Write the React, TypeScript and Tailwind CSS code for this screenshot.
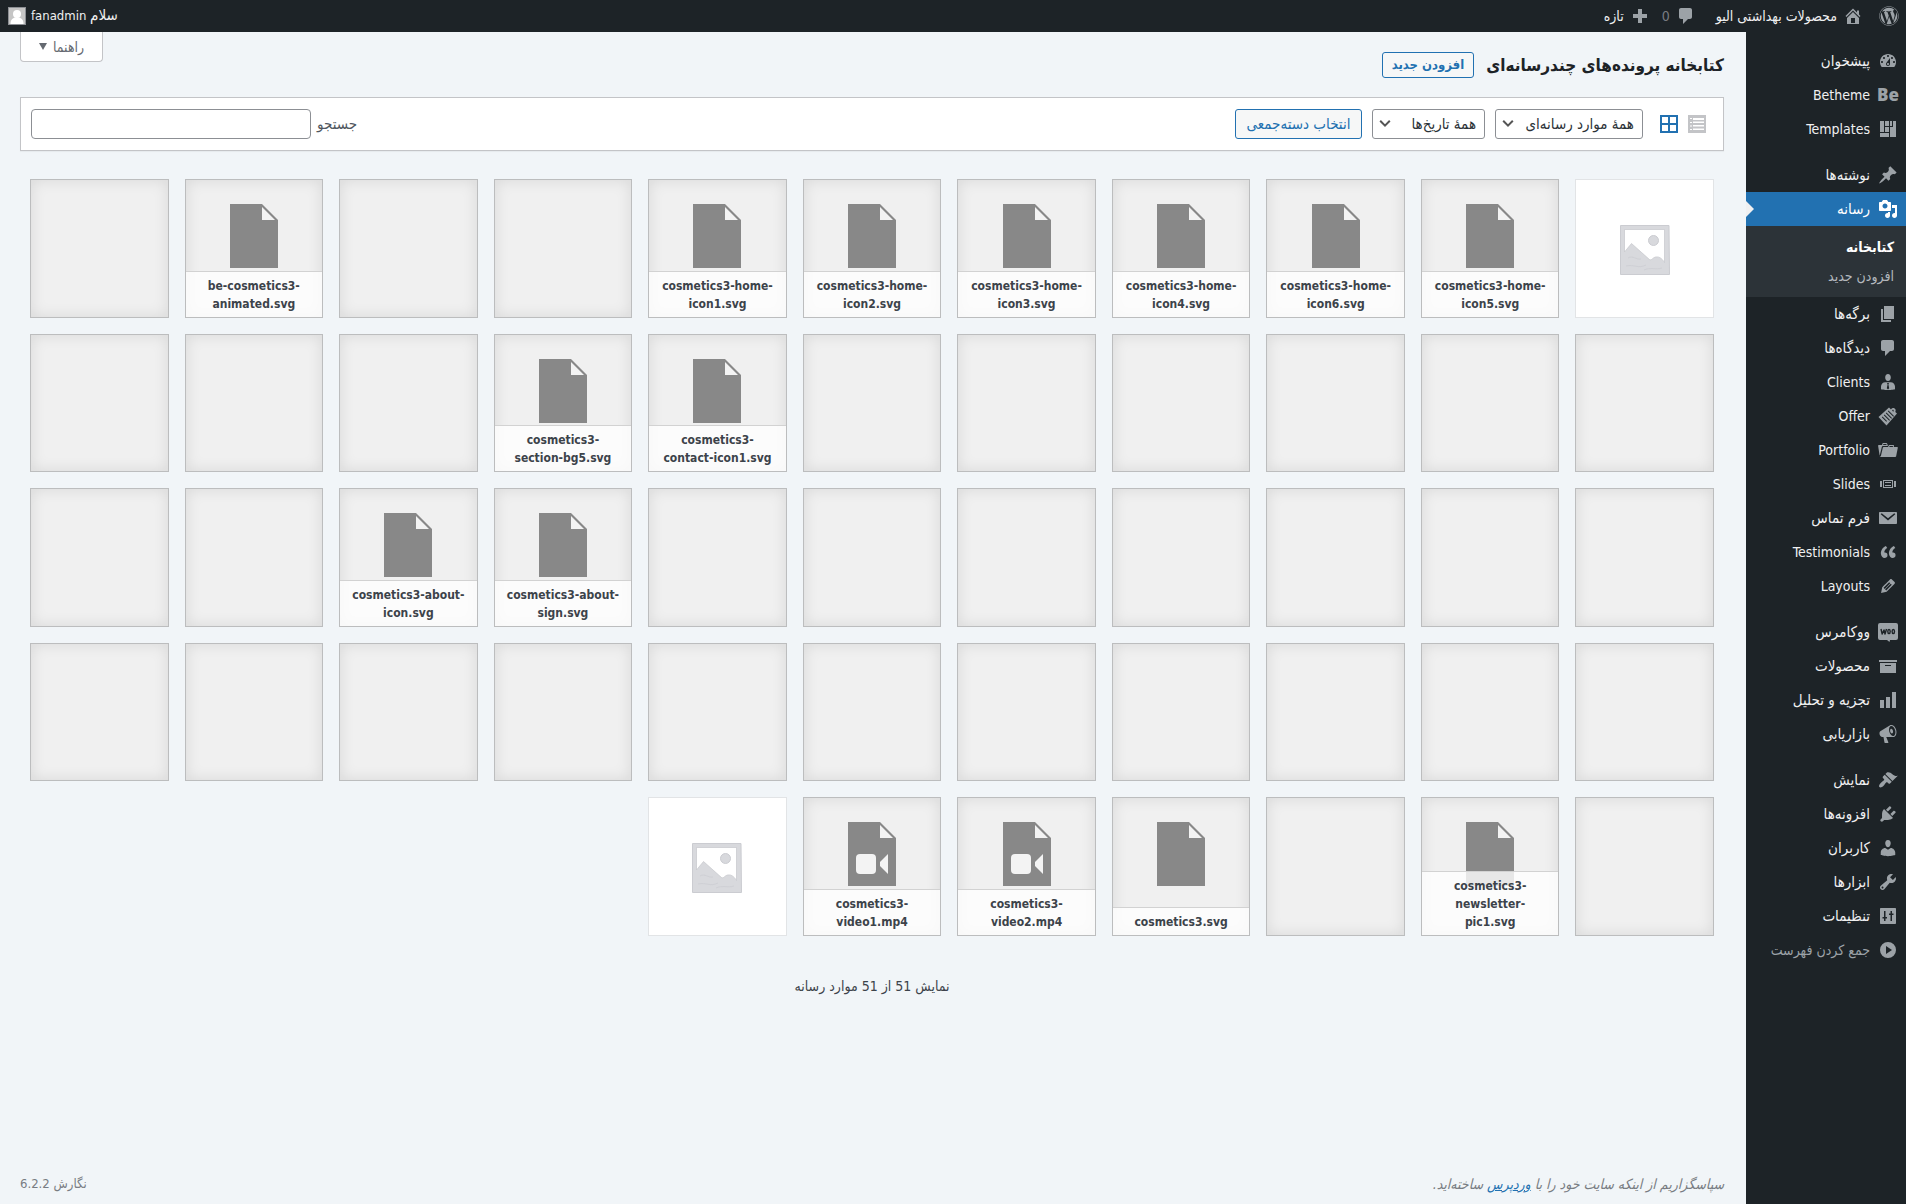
import { useState, type ReactNode } from 'react';
import { FaWordpress } from 'react-icons/fa';
import { clsx } from 'clsx';

interface MenuEntry {
  id: string;
  label: string;
  icon: ReactNode;
  latin?: boolean;
  muted?: boolean;
}

interface MediaItem {
  type: 'empty' | 'file' | 'video' | 'image';
  name?: string;
}

const Glyph = ({ d, className = 'size-5' }: { d: string; className?: string }) => (
  <svg viewBox="0 0 20 20" fill="currentColor" fillRule="evenodd" className={className} aria-hidden="true">
    <path d={d} />
  </svg>
);

const PATHS = {
  dashboard:
    'M3.76 16h12.48c1.1-1.37 1.76-3.11 1.76-5 0-4.42-3.58-8-8-8s-8 3.58-8 8c0 1.89.66 3.63 1.76 5zM10 4c.55 0 1 .45 1 1s-.45 1-1 1-1-.45-1-1 .45-1 1-1zM6 6c.55 0 1 .45 1 1s-.45 1-1 1-1-.45-1-1 .45-1 1-1zm8 0c.55 0 1 .45 1 1s-.45 1-1 1-1-.45-1-1 .45-1 1-1zm-5.37 5.55L12 7v6c0 1.1-.9 2-2 2s-2-.9-2-2c0-.57.24-1.08.63-1.45zM4 10c.55 0 1 .45 1 1s-.45 1-1 1-1-.45-1-1 .45-1 1-1zm12 0c.55 0 1 .45 1 1s-.45 1-1 1-1-.45-1-1 .45-1 1-1zm-5 3c0-.55-.45-1-1-1s-1 .45-1 1 .45 1 1 1 1-.45 1-1z',
  templates: 'M2 2h4v11H2zM7 2h4v5H7zM7 8h4v5H7zM2 14h9v4H2zM12 2h2v5h-2zM15 2h3v16h-6V8h3z',
  post: 'M10.44 3.02l1.82-1.82 6.36 6.35-1.83 1.82c-1.05-.68-2.48-.57-3.41.36l-.75.75c-.92.93-1.04 2.35-.35 3.41l-1.83 1.82-2.41-2.41-2.8 2.79c-.42.42-3.38 2.71-3.8 2.29s1.86-3.39 2.28-3.81l2.79-2.79L4.1 9.36l1.83-1.82c1.05.69 2.48.57 3.4-.36l.75-.75c.93-.92 1.05-2.35.36-3.41z',
  media:
    'M13 11V4c0-.55-.45-1-1-1h-1.67L9 1H5L3.67 3H2c-.55 0-1 .45-1 1v7c0 .55.45 1 1 1h10c.55 0 1-.45 1-1zM7 4.5c1.38 0 2.5 1.12 2.5 2.5S8.38 9.5 7 9.5 4.5 8.38 4.5 7 5.62 4.5 7 4.5zM14 6h5v10.5c0 1.38-1.12 2.5-2.5 2.5S14 17.88 14 16.5s1.12-2.5 2.5-2.5c.17 0 .34.02.5.05V9h-3V6zm-4 8.05V13h2v3.5c0 1.38-1.12 2.5-2.5 2.5S7 17.88 7 16.5 8.12 14 9.5 14c.17 0 .34.02.5.05z',
  page: 'M6 15V2h10v13H6zm-1 1h8v2H3V5h2v11z',
  comments: 'M5 2h9c1.1 0 2 .9 2 2v7c0 1.1-.9 2-2 2h-2l-5 5v-5H5c-1.1 0-2-.9-2-2V4c0-1.1.9-2 2-2z',
  clients:
    'M10 9c-2.1 0-2.8-2.1-2.8-3.6C7.2 3.5 8.3 2 10 2s2.8 1.5 2.8 3.4C12.8 6.9 12.1 9 10 9zM7.3 10.2h5.4c2.4 0 4.3 2 4.3 4.3v2.7s-3.5.8-7 .8-7-.8-7-.8v-2.7c0-2.3 1.9-4.3 4.3-4.3zM9 11l.6 1.5-.8 3.8L10 17.5l1.2-1.2-.8-3.8L11 11z',
  offer:
    'M11 1.5l2 2c.7-1.2 2-1.8 3.3-1.2 1.5.7 1.7 2.3 1 3.6l1.7 1.6L8.5 19.5.5 11zM14.3 4.7l1 1c.5-.6.6-1.5 0-1.9-.5-.4-1.2.1-1 .9zM10.5 4.5l-.7.7 5.5 5.5.7-.7zM8.5 6.5l-.7.7 5.5 5.5.7-.7zM6.5 8.5l-.7.7 5.5 5.5.7-.7zM4.5 10.5l-.7.7 4.5 4.5.7-.7z',
  portfolio:
    'M4 5H.78c-.37 0-.74.32-.69.84l1.56 9.99S3.5 8.47 3.86 6.7c.11-.53.61-.7.98-.7H10s-.7-2.08-.77-2.31C9.11 3.25 8.89 3 8.45 3H5.14c-.36 0-.7.23-.8.64C4.25 4.04 4 5 4 5zm4.88 0h-4s.42-1 .87-1h2.13c.48 0 1 1 1 1zM2.67 16.25c-.31.47-.76.75-1.26.75h15.73c.54 0 .92-.31 1.03-.83.44-2.19 1.68-8.44 1.68-8.44.07-.5-.3-.73-.62-.73H16V5.53c0-.16-.26-.53-.66-.53h-3.76c-.52 0-.87.58-.87.58L10 7H5.59c-.32 0-.63.19-.69.5 0 0-1.59 6.7-1.72 7.33-.07.37-.22.99-.51 1.42zM15.38 7H11s.58-1 1.13-1h2.29c.71 0 .96 1 .96 1z',
  slides: 'M2 7h2v6H2zM16 7h2v6h-2zM5 6h10v8H5zM6 7v6h8V7zM7 8h6v1H7zM7 11h6v1H7z',
  mail: 'M2 4h16c.5 0 1 .4 1 1v10c0 .6-.5 1-1 1H2c-.6 0-1-.4-1-1V5c0-.6.4-1 1-1zM3.7 5.2l-1 1L10 12.5l7.3-6.3-1-1L10 10.3z',
  quote:
    'M9.49 13.22c0-.74-.2-1.38-.61-1.9-.62-.78-1.83-.88-2.53-.72-.29-1.65 1.11-3.75 2.92-4.65L7.88 4c-2.73 1.3-5.42 4.28-4.96 8.05C3.21 14.43 4.59 16 6.54 16c.85 0 1.56-.25 2.12-.75s.83-1.18.83-2.03zm8.05 0c0-.74-.2-1.38-.61-1.9-.63-.78-1.83-.88-2.53-.72-.29-1.65 1.11-3.75 2.92-4.65L15.93 4c-2.73 1.3-5.41 4.28-4.95 8.05.29 2.38 1.66 3.95 3.61 3.95.85 0 1.56-.25 2.12-.75s.83-1.18.83-2.03z',
  edit: 'M13.89 3.39l2.71 2.72c.46.46.42 1.24.03 1.64l-8.01 8.02-5.56 1.16 1.16-5.58s7.6-7.63 7.99-8.03c.39-.39 1.22-.39 1.68.07zm-2.73 2.79l-5.59 5.61 1.11 1.11 5.54-5.65zm-2.97 8.23l5.58-5.6-1.07-1.08-5.59 5.6z',
  archive: 'M19 4v2H1V4h18zM2 7h16v10H2V7zm11 3V9H7v1h6z',
  chart: 'M18 18V2h-4v16h4zm-6 0V7H8v11h4zm-6 0v-8H2v8h4z',
  megaphone:
    'M18.15 5.94c.46 1.62.38 3.22-.02 4.48-.42 1.28-1.26 2.18-2.3 2.48-.16.06-.26.06-.4.06-.06.02-.12.02-.18.02-.06.02-.14.02-.22.02h-6.8l2.22 5.5c.02.14-.06.26-.14.34-.08.1-.24.16-.34.16H6.95c-.1 0-.26-.06-.34-.16-.08-.08-.16-.2-.14-.34l-1-5.5H4.25l-.02-.02c-.5.06-1.08-.18-1.54-.62s-.88-1.08-1.06-1.88c-.24-.8-.2-1.56-.02-2.2.18-.62.58-1.08 1.06-1.3l.02-.02 9-5.4c.1-.06.18-.1.24-.16.06-.04.14-.08.24-.12.16-.08.28-.12.5-.18 1.04-.3 2.24.1 3.22.98s1.84 2.24 2.26 3.86zm-2.58 5.98h-.02c.4-.1.74-.34 1.04-.7.58-.7.86-1.76.86-3.04 0-.64-.1-1.3-.28-1.98-.34-1.36-1.02-2.5-1.78-3.24s-1.68-1.1-2.46-.88c-.82.22-1.4.96-1.7 2-.32 1.04-.28 2.36.06 3.72.38 1.36 1 2.5 1.8 3.24.78.74 1.62 1.1 2.48.88zm-2.54-7.08c.22-.04.42-.02.62.04.38.16.76.48 1.02 1s.42 1.2.42 1.78c0 .3-.04.56-.12.8-.18.48-.44.84-.86.94-.34.1-.8-.06-1.14-.4s-.64-.86-.78-1.5c-.18-.62-.12-1.24.02-1.72s.48-.84.82-.94z',
  appearance:
    'M14.48 11.06L7.41 3.99l1.5-1.5c.5-.56 2.3-.47 3.51.32 1.21.8 1.43 1.28 2.91 2.1 1.18.64 2.45 1.26 4.45.85zm-.71.71L6.7 4.7 4.93 6.47c-.39.39-.39 1.02 0 1.41l1.06 1.06c.39.39.39 1.03 0 1.42-.6.6-1.43 1.11-2.21 1.69-.35.26-.7.53-1.01.84C1.43 14.23.4 16.08 1.4 17.07c.99 1 2.84-.03 4.18-1.36.31-.31.58-.66.85-1.02.57-.78 1.08-1.61 1.69-2.21.39-.39 1.02-.39 1.41 0l1.06 1.06c.39.39 1.02.39 1.41 0z',
  plugins:
    'M13.11 4.36L9.87 7.6 8 5.73l3.24-3.24c.35-.34 1.05-.2 1.56.32.52.51.66 1.21.31 1.55zm-8 1.77l.91-1.12 9.01 9.01-1.19.84c-.71.71-2.63 1.16-3.82 1.16H6.14L4.9 17.26c-.59.59-1.54.59-2.12 0-.59-.58-.59-1.53 0-2.12l1.24-1.24v-3.88c0-1.13.4-3.19 1.09-3.89zm7.26 3.97l3.24-3.24c.34-.35 1.04-.21 1.55.31.52.51.66 1.21.31 1.55l-3.24 3.25z',
  users:
    'M10 9.25c-2.27 0-2.73-3.44-2.73-3.44C7 4.02 7.82 2 9.97 2c2.16 0 2.98 2.02 2.71 3.81 0 0-.41 3.44-2.68 3.44zm0 2.57L12.72 10c2.39 0 4.52 2.33 4.52 4.53v2.49s-3.65 1.13-7.24 1.13c-3.65 0-7.24-1.13-7.24-1.13v-2.49c0-2.25 1.94-4.48 4.47-4.48z',
  tools:
    'M16.68 9.77c-1.34 1.34-3.3 1.67-4.95.99l-5.41 6.52c-.99.99-2.59.99-3.58 0s-.99-2.59 0-3.57l6.52-5.42c-.68-1.65-.35-3.61.99-4.95 1.28-1.28 3.12-1.62 4.72-1.06l-2.89 2.89 2.82 2.82 2.86-2.87c.53 1.58.18 3.39-1.08 4.65zM3.81 16.21c.4.39 1.04.39 1.43 0 .4-.4.4-1.04 0-1.43-.39-.4-1.03-.4-1.43 0-.39.39-.39 1.03 0 1.43z',
  settings:
    'M3 2h14c.6 0 1 .4 1 1v14c0 .6-.4 1-1 1H3c-.6 0-1-.4-1-1V3c0-.6.4-1 1-1zM6 5v6H4.5v1.5H6V15h1.5v-2.5H9V11H7.5V5zM12.5 5v2.5H11V9h1.5v6H14V9h1.5V7.5H14V5z',
  collapse: 'M10 2a8 8 0 1 1 0 16 8 8 0 0 1 0-16zM8 6v8l6-4z',
  home: 'M16 8.5l1.53 1.53-1.06 1.06L10 4.6l-6.47 6.49-1.06-1.06L10 2.5l4 4v-2h2v4zm-6-2.46l6 5.99V18H4v-5.97zM12 17v-5H8v5h4z',
  plus: 'M8 3h4v5h5v4h-5v5H8v-5H3V8h5z',
  list: 'M1 1h18v18H1zM3 4v1h2V4zM6 4v2h11V4zM3 8v1h2V8zM6 7.5V9h11V7.5zM3 11.5v1h2v-1zM6 11v1.5h11V11zM3 15v1h2v-1zM6 14.5V16h11v-1.5z',
  grid: 'M1 1h18v18H1zM3 3v6h6V3zM11 3v6h6V3zM3 11v6h6v-6zM11 11v6h6v-6z',
};

const WooIcon = () => (
  <svg viewBox="0 0 20 20" className="size-5" aria-hidden="true">
    <path fill="currentColor" d="M2 1h16a2 2 0 0 1 2 2v13a2 2 0 0 1-2 2h-6l-.5 2L9 18H2a2 2 0 0 1-2-2V3a2 2 0 0 1 2-2z" />
    <g fill="none" stroke="#1d2327" strokeWidth="1.4" strokeLinejoin="round">
      <path d="M3 7l1.2 5L6 8l1 4 1.5-5" />
      <ellipse cx="11" cy="9.5" rx="1.2" ry="2" />
      <ellipse cx="15.3" cy="9.5" rx="1.2" ry="2" />
    </g>
  </svg>
);

const MENU_GROUPS: MenuEntry[][] = [
  [
    { id: 'dashboard', label: 'پیشخوان', icon: <Glyph d={PATHS.dashboard} /> },
    {
      id: 'betheme',
      label: 'Betheme',
      latin: true,
      icon: <span className="font-['Open_Sans',sans-serif] text-[17px] font-extrabold">Be</span>,
    },
    { id: 'templates', label: 'Templates', latin: true, icon: <Glyph d={PATHS.templates} /> },
  ],
  [
    { id: 'posts', label: 'نوشته‌ها', icon: <Glyph d={PATHS.post} /> },
    { id: 'media', label: 'رسانه', icon: <Glyph d={PATHS.media} /> },
    { id: 'pages', label: 'برگه‌ها', icon: <Glyph d={PATHS.page} /> },
    { id: 'comments', label: 'دیدگاه‌ها', icon: <Glyph d={PATHS.comments} /> },
    { id: 'clients', label: 'Clients', latin: true, icon: <Glyph d={PATHS.clients} /> },
    { id: 'offer', label: 'Offer', latin: true, icon: <Glyph d={PATHS.offer} /> },
    { id: 'portfolio', label: 'Portfolio', latin: true, icon: <Glyph d={PATHS.portfolio} /> },
    { id: 'slides', label: 'Slides', latin: true, icon: <Glyph d={PATHS.slides} /> },
    { id: 'forms', label: 'فرم تماس', icon: <Glyph d={PATHS.mail} /> },
    { id: 'testimonials', label: 'Testimonials', latin: true, icon: <Glyph d={PATHS.quote} /> },
    { id: 'layouts', label: 'Layouts', latin: true, icon: <Glyph d={PATHS.edit} /> },
  ],
  [
    { id: 'woo', label: 'ووکامرس', icon: <WooIcon /> },
    { id: 'products', label: 'محصولات', icon: <Glyph d={PATHS.archive} /> },
    { id: 'analytics', label: 'تجزیه و تحلیل', icon: <Glyph d={PATHS.chart} /> },
    { id: 'marketing', label: 'بازاریابی', icon: <Glyph d={PATHS.megaphone} /> },
  ],
  [
    { id: 'appearance', label: 'نمایش', icon: <Glyph d={PATHS.appearance} /> },
    { id: 'plugins', label: 'افزونه‌ها', icon: <Glyph d={PATHS.plugins} /> },
    { id: 'users', label: 'کاربران', icon: <Glyph d={PATHS.users} /> },
    { id: 'tools', label: 'ابزارها', icon: <Glyph d={PATHS.tools} /> },
    { id: 'settings', label: 'تنظیمات', icon: <Glyph d={PATHS.settings} /> },
    { id: 'collapse', label: 'جمع کردن فهرست', icon: <Glyph d={PATHS.collapse} />, muted: true },
  ],
];

const empty = (count: number): MediaItem[] => Array.from({ length: count }, () => ({ type: 'empty' }));
const file = (name: string): MediaItem => ({ type: 'file', name });
const video = (name: string): MediaItem => ({ type: 'video', name });

const MEDIA: MediaItem[] = [
  { type: 'image' },
  file('cosmetics3-home-icon5.svg'),
  file('cosmetics3-home-icon6.svg'),
  file('cosmetics3-home-icon4.svg'),
  file('cosmetics3-home-icon3.svg'),
  file('cosmetics3-home-icon2.svg'),
  file('cosmetics3-home-icon1.svg'),
  ...empty(2),
  file('be-cosmetics3-animated.svg'),
  ...empty(7),
  file('cosmetics3-contact-icon1.svg'),
  file('cosmetics3-section-bg5.svg'),
  ...empty(10),
  file('cosmetics3-about-sign.svg'),
  file('cosmetics3-about-icon.svg'),
  ...empty(14),
  file('cosmetics3-newsletter-pic1.svg'),
  ...empty(1),
  file('cosmetics3.svg'),
  video('cosmetics3-video2.mp4'),
  video('cosmetics3-video1.mp4'),
  { type: 'image' },
];

const FileIcon = ({ isVideo }: { isVideo: boolean }) => (
  <svg viewBox="0 0 48 64" className="h-16 w-12" aria-hidden="true">
    <path fill="#888" d="M0 0h32l16 16v48H0z" />
    <path fill="#f3f3f3" d="M32 3v13h13z" />
    {isVideo && (
      <g fill="#f3f3f3">
        <rect x="8" y="32" width="20" height="20" rx="4" />
        <path d="M40 32v20l-8-8v-4z" />
      </g>
    )}
  </svg>
);

const ImagePlaceholder = () => (
  <svg viewBox="0 0 50 50" className="size-[50px]" aria-hidden="true">
    <path fill="#d8d9dd" stroke="#cbccd1" d="M.5.5h48.5l.5 49H.5z" />
    <path
      fill="#fff"
      stroke="#c6c7cc"
      strokeWidth=".7"
      d="M4.5 4.5h40v33c-3-5-6-6-9-5.5-2.5.5-3.5 3-5.5 3L11.5 18.5l-7 8.5z"
    />
    <circle cx="33.5" cy="15.5" r="5" fill="#d8d9dd" stroke="#cbccd1" />
    <path stroke="#cfd0d5" fill="none" d="M8 33c5-3 8 2 13 1M6 41c8-2 12 3 20-1M24 45c6-3 12 0 18-2" />
  </svg>
);

const MediaTile = ({ item }: { item: MediaItem }) => {
  if (item.type === 'image') {
    return (
      <li className="flex aspect-square items-center justify-center border border-[#e2e4e6] bg-white pt-1">
        <ImagePlaceholder />
      </li>
    );
  }

  return (
    <li className="relative aspect-square border border-[#bcbdbe] bg-[#f0f0f0] shadow-[inset_0_0_15px_rgba(0,0,0,0.1)]">
      {item.name && (
        <>
          <div className="flex justify-center pt-6">
            <FileIcon isVideo={item.type === 'video'} />
          </div>
          <div
            dir="ltr"
            className="absolute inset-x-0 bottom-0 border-t border-[#d2d2d2] bg-white/80 px-[10px] pt-[5px] pb-1 text-center text-xs leading-[18px] font-bold text-[#3c434a]"
          >
            {item.name}
          </div>
        </>
      )}
    </li>
  );
};

const AdminBar = () => (
  <header className="flex h-8 items-center justify-between bg-[#1d2327] text-sm text-[#f0f0f1]">
    <nav className="flex items-center pr-[7px]">
      <a href="#about" aria-label="وردپرس" className="text-[#9ca2a7]">
        <FaWordpress className="size-5" />
      </a>
      <a href="#site" className="mr-4 flex items-center gap-1.5">
        <Glyph d={PATHS.home} className="size-5 text-[#9ca2a7]" />
        محصولات بهداشتی الیو
      </a>
      <a href="#comments" className="mr-5 flex items-center gap-1.5 text-[#9ca2a7]">
        <Glyph d={PATHS.comments} />
        <span className="text-[#787c82]">0</span>
      </a>
      <a href="#new" className="mr-3 flex items-center gap-1.5">
        <Glyph d={PATHS.plus} className="size-5 text-[#9ca2a7]" />
        تازه
      </a>
    </nav>
    <a href="#profile" className="flex items-center gap-[5px] pl-2 text-[13px]">
      <span>
        <span className="text-[15px]">سلام</span> fanadmin
      </span>
      <svg viewBox="0 0 18 18" className="size-[18px]" aria-hidden="true">
        <path fill="#8c8f94" d="M0 0h18v18H0z" />
        <path fill="#c5c5c5" d="M1 1h16v16H1z" />
        <circle cx="9" cy="7" r="4" fill="#fff" />
        <path fill="#fff" d="M2.5 17c0-4 2-6 4.5-6.5h4c2.5.5 4.5 2.5 4.5 6.5z" />
      </svg>
    </a>
  </header>
);

const Sidebar = () => (
  <aside className="w-40 shrink-0 bg-[#1d2327] pt-3">
    {MENU_GROUPS.map((group, index) => (
      <ul key={index} className="mb-3">
        {group.map((entry) => {
          const active = entry.id === 'media';
          return (
            <li key={entry.id}>
              <a
                href={`#${entry.id}`}
                className={clsx(
                  'relative flex h-[34px] items-center',
                  entry.latin || entry.muted ? 'text-sm' : 'text-[15px]',
                  active && 'bg-[#2271b1] text-white',
                  !active && (entry.muted ? 'text-[#9ca2a7]' : 'text-[#f0f0f1]')
                )}
              >
                <span className={clsx('flex w-9 justify-center', active ? 'text-white' : 'text-[#9ca2a7]')}>
                  {entry.icon}
                </span>
                {entry.label}
                {active && (
                  <span className="absolute top-[9px] left-0 border-y-8 border-l-8 border-y-transparent border-l-[#f0f0f1]" />
                )}
              </a>
              {active && (
                <ul className="bg-[#2c3338] px-3 py-[7px]">
                  <li>
                    <a href="#library" className="flex h-7 items-center text-sm font-bold text-white">
                      کتابخانه
                    </a>
                  </li>
                  <li>
                    <a href="#media-new" className="flex h-[29px] items-center text-sm text-[#b4b9be]">
                      افزودن جدید
                    </a>
                  </li>
                </ul>
              )}
            </li>
          );
        })}
      </ul>
    ))}
  </aside>
);

const FilterSelect = ({ id, label, text, className }: { id: string; label: string; text: string; className: string }) => (
  <div className={clsx('relative', className)}>
    <select
      id={id}
      aria-label={label}
      className="h-[30px] w-full appearance-none rounded-[3px] border border-[#8c8f94] bg-white pr-2 pl-6 text-[15px] text-[#2c3338]"
    >
      <option>{text}</option>
    </select>
    <svg
      viewBox="0 0 20 20"
      className="pointer-events-none absolute top-[7px] left-[5px] size-4"
      fill="none"
      stroke="#555"
      strokeWidth="2.5"
      aria-hidden="true"
    >
      <path d="M4 6l6 6 6-6" />
    </svg>
  </div>
);

const Toolbar = () => {
  const [search, setSearch] = useState('');

  return (
    <div className="mt-[18px] flex items-center justify-between border border-[#c3c4c7] bg-white px-[10px] py-[11px] text-[15px] shadow-[0_1px_1px_rgba(0,0,0,0.04)]">
      <div className="flex items-center">
        <a href="#list" aria-label="نمای فهرست" className="mr-1.5 text-[#c3c4c7]">
          <Glyph d={PATHS.list} />
        </a>
        <a href="#grid" aria-label="نمای شبکه‌ای" className="mr-2 ml-4 text-[#2271b1]">
          <Glyph d={PATHS.grid} />
        </a>
        <FilterSelect id="media-type" label="نوع رسانه" text="همهٔ موارد رسانه‌ای" className="ml-[10px] w-[148px]" />
        <FilterSelect id="media-date" label="تاریخ" text="همهٔ تاریخ‌ها" className="ml-[10px] w-[113px]" />
        <button
          type="button"
          className="h-[30px] w-[127px] rounded-[3px] border border-[#2271b1] bg-[#f6f7f7] text-[#2271b1]"
        >
          انتخاب دسته‌جمعی
        </button>
      </div>
      <div className="flex items-center gap-1.5">
        <label htmlFor="media-search" className="text-[#50575e]">
          جستجو
        </label>
        <input
          id="media-search"
          type="search"
          value={search}
          onChange={(e) => setSearch(e.target.value)}
          className="h-[30px] w-[280px] rounded border border-[#8c8f94] bg-white px-2"
        />
      </div>
    </div>
  );
};

const App = () => (
  <div
    dir="rtl"
    className="flex min-h-screen flex-col bg-[#f1f5f8] font-['DejaVu_Sans_Condensed','DejaVu_Sans',sans-serif] text-[13px] text-[#3c434a]"
  >
    <AdminBar />
    <div className="flex flex-1">
      <Sidebar />
      <main className="flex min-w-0 flex-1 flex-col pr-[22px] pl-5">
        <div className="flex items-start justify-between">
          <div className="flex items-center gap-3 pt-[19px]">
            <h1 className="text-[17px] leading-[28px] font-bold text-[#1d2327]">کتابخانه پرونده‌های چندرسانه‌ای</h1>
            <a
              href="#media-new"
              className="flex h-[26px] items-center rounded-[3px] border border-[#2271b1] bg-[#f6f7f7] px-[9px] font-bold text-[#2271b1]"
            >
              افزودن جدید
            </a>
          </div>
          <button
            type="button"
            className="flex h-[30px] items-center gap-1.5 rounded-b border border-t-0 border-[#c3c4c7] bg-white px-[18px] text-sm text-[#646970]"
          >
            راهنما
            <span className="border-x-4 border-t-[7px] border-x-transparent border-t-[#646970]" />
          </button>
        </div>

        <Toolbar />

        <ul className="mt-7 grid grid-cols-11 gap-4 px-[10px]">
          {MEDIA.map((item, index) => (
            <MediaTile key={index} item={item} />
          ))}
        </ul>
        <p className="mt-10 text-center text-sm leading-5">نمایش 51 از 51 موارد رسانه</p>

        <footer className="mt-auto flex items-center justify-between pb-[10px] leading-5 text-[#787c82]">
          <p className="text-sm leading-5 italic">
            سپاسگزاریم از اینکه سایت خود را با{' '}
            <a href="#wordpress" className="text-[#2271b1] underline">
              وردپرس
            </a>{' '}
            ساخته‌اید.
          </p>
          <p>نگارش 6.2.2</p>
        </footer>
      </main>
    </div>
  </div>
);

export default App;
